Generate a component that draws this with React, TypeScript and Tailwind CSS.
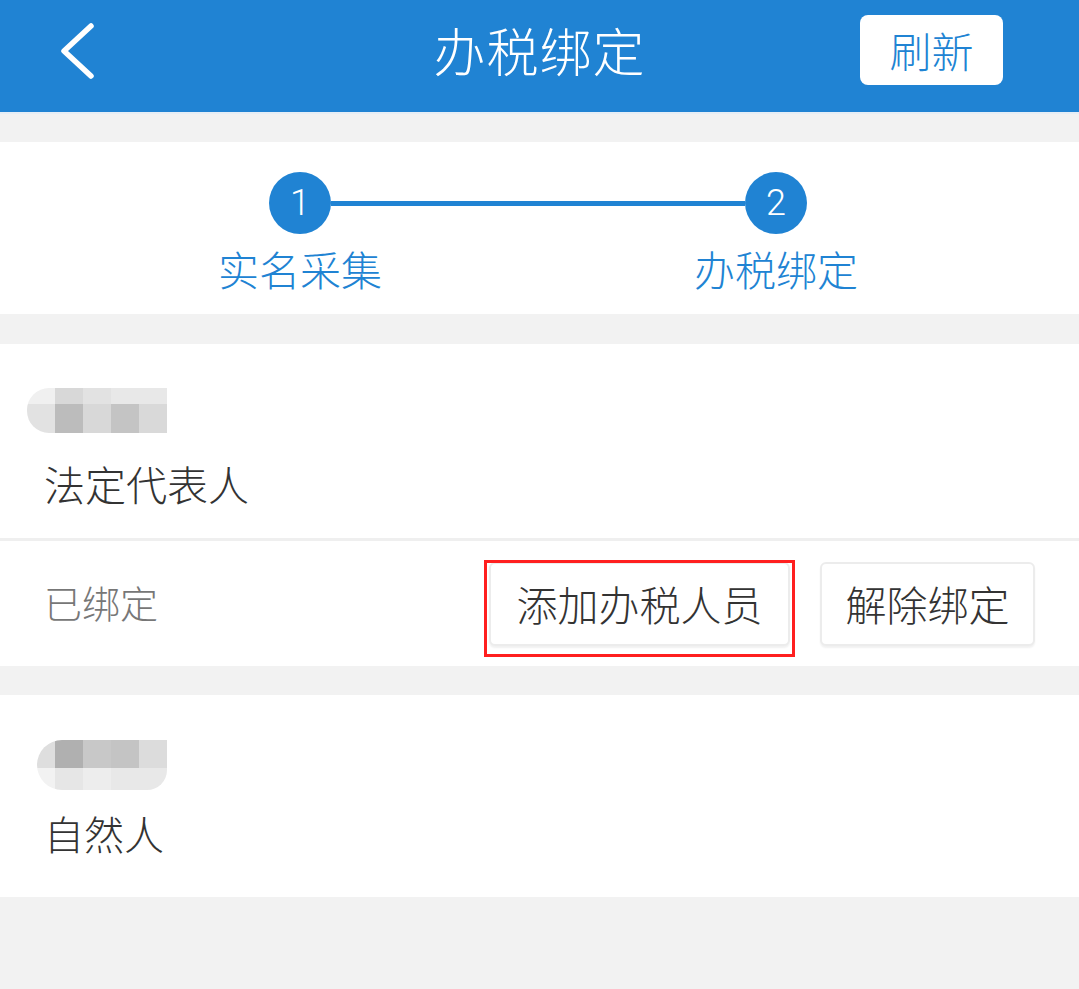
const cjk = "font-['Noto_Sans_CJK_SC','Noto_Sans',sans-serif]";

function Mosaic({ rows, colWidths, rowHeights, className = "" }: { rows: string[][]; colWidths: number[]; rowHeights: number[]; className?: string }) {
  return (
    <div className={`flex flex-col overflow-hidden ${className}`}>
      {rows.map((row, r) => (
        <div key={r} className="flex">
          {row.map((c, i) => (
            <div key={i} style={{ width: colWidths[i], height: rowHeights[r], background: c }} />
          ))}
        </div>
      ))}
    </div>
  );
}

function Step({ n }: { n: number }) {
  return (
    <div className="w-[62px] h-[62px] rounded-full bg-[#2083d3] flex items-center justify-center text-white text-[36px] leading-none font-['Roboto',sans-serif]">
      {n}
    </div>
  );
}

export default function App() {
  return (
    <div className={`w-[1079px] h-[989px] bg-[#f2f2f2] font-light ${cjk}`}>
      <header className="h-[112px] bg-[#2083d3] grid grid-cols-[1fr_auto_1fr] items-center pb-[12px]">
        <div className="pl-[57px]">
          <svg width="40" height="60" viewBox="0 0 40 60" fill="none">
            <polyline points="34,6 7,31 34,56" stroke="white" strokeWidth="5.5" strokeLinecap="round" strokeLinejoin="round" />
          </svg>
        </div>
        <h1 className="text-white text-[52px] leading-none tracking-[1px]">办税绑定</h1>
        <div className="flex justify-end pr-[76px]">
          <button className="w-[143px] h-[70px] bg-white rounded-[8px] text-[#2083d3] text-[42px] leading-none">刷新</button>
        </div>
      </header>
      <div className="h-[2px] bg-[#e6eef6]" />

      <section className="mt-[28px] h-[172px] bg-white pt-[30px]">
        <div className="flex items-center pl-[269px]">
          <Step n={1} />
          <div className="w-[414px] h-[5px] bg-[#2083d3]" />
          <Step n={2} />
        </div>
        <div className="flex pl-[200px] gap-[276px] mt-[10px] text-[#2083d3] text-[41px] leading-[48px]">
          <div className="w-[200px] text-center">实名采集</div>
          <div className="w-[200px] text-center">办税绑定</div>
        </div>
      </section>

      <section className="mt-[30px] bg-white">
        <div className="pt-[44px] pb-[29px]">
          <Mosaic
            className="ml-[27px] w-[140px] rounded-l-[22px]"
            colWidths={[28, 28, 28, 28, 28]}
            rowHeights={[16, 29]}
            rows={[
              ["#f0f0f0", "#d8d8d8", "#e2e2e2", "#e8e8e8", "#e8e8e8"],
              ["#e2e2e2", "#bcbcbc", "#d8d8d8", "#c4c4c4", "#d9d9d9"],
            ]}
          />
          <div className="mt-[24px] pl-[44px] text-[41px] leading-[52px] text-[#333]">法定代表人</div>
        </div>
        <div className="h-[3px] bg-[#efefef]" />
        <div className="h-[125px] flex items-center pl-[44px] pr-[44px]">
          <span className="text-[38px] leading-none text-[#777] -mt-[4px]">已绑定</span>
          <div className="ml-auto flex gap-[30px]">
            <div className="relative">
              <button className="w-[301px] h-[84px] rounded-[6px] border-2 border-[#ececec] bg-white shadow-[0_2px_2px_rgba(0,0,0,0.06)] text-[41px] leading-none text-[#333]">
                添加办税人员
              </button>
              <div className="absolute left-[-5px] right-[-5px] top-[-2px] bottom-[-11px] border-[3px] border-[#ff1f1f] pointer-events-none" />
            </div>
            <button className="w-[215px] h-[84px] rounded-[6px] border-2 border-[#ececec] bg-white shadow-[0_2px_2px_rgba(0,0,0,0.06)] text-[41px] leading-none text-[#333]">
              解除绑定
            </button>
          </div>
        </div>
      </section>

      <section className="mt-[29px] h-[202px] bg-white pt-[45px]">
        <Mosaic
          className="ml-[37px] w-[130px] rounded-l-[25px] rounded-br-[20px]"
          colWidths={[18, 28, 28, 28, 28]}
          rowHeights={[28, 22]}
          rows={[
            ["#dedede", "#b0b0b0", "#c8c8c8", "#c4c4c4", "#dcdcdc"],
            ["#f2f2f2", "#e6e6e6", "#ededed", "#e8e8e8", "#e8e8e8"],
          ]}
        />
        <div className="mt-[17px] pl-[44px] text-[40px] leading-[52px] text-[#333]">自然人</div>
      </section>
    </div>
  );
}
